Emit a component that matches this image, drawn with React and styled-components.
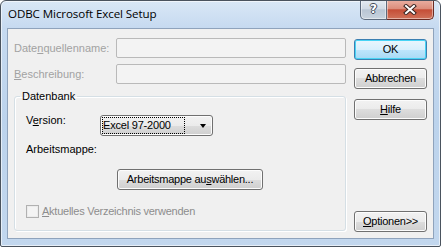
import React from 'react';
import styled, { createGlobalStyle } from 'styled-components';

const GlobalStyle = createGlobalStyle`
  html, body {
    margin: 0;
    padding: 0;
    background: #ffffff;
  }
  body {
    font-family: "Liberation Sans", Arial, sans-serif;
    font-size: 11px;
    color: #000;
  }
  * {
    box-sizing: border-box;
  }
`;

const Window = styled.div`
  width: 441px;
  height: 247px;
  display: flex;
  flex-direction: column;
  border: 1px solid #4a535e;
  border-radius: 6px 6px 2px 2px;
  background: linear-gradient(to bottom, #d9e7f6 0px, #c6daf0 27px, #bcd3ec 120px, #c2d7ee 100%);
  box-shadow: inset 0 0 0 1px rgba(255, 255, 255, 0.6);
  overflow: hidden;
`;

const TitleBar = styled.div`
  height: 27px;
  display: flex;
  align-items: flex-start;
  padding: 0 6px 0 7px;
`;

const Title = styled.div`
  flex: 1;
  margin-top: 5px;
  font-family: "Open Sans", "Noto Sans", sans-serif;
  font-size: 11.6px;
  line-height: 16px;
  color: #000;
  letter-spacing: -0.1px;
`;

const CaptionGroup = styled.div`
  display: flex;
  height: 20px;
  margin-top: -1px;
`;

const CaptionButton = styled.div`
  height: 20px;
  width: ${(p) => (p.$close ? 47 : 27)}px;
  display: flex;
  align-items: center;
  justify-content: center;
  border: 1px solid ${(p) => (p.$close ? '#6b2b22' : '#5d6b7d')};
  border-top: none;
  border-left: ${(p) => (p.$close ? 'none' : '1px solid #5d6b7d')};
  border-radius: ${(p) => (p.$close ? '0 0 5px 0' : '0 0 0 5px')};
  background: ${(p) =>
    p.$close
      ? 'linear-gradient(to bottom, #eab0a3 0%, #dc8e7c 45%, #c54e37 52%, #d0725a 100%)'
      : 'linear-gradient(to bottom, #e6ecf2 0%, #d2dbe5 45%, #b9c6d4 52%, #c8d3de 100%)'};
  box-shadow: inset 0 0 0 1px rgba(255, 255, 255, 0.45);
`;

const HelpGlyph = styled.span`
  font-family: "DejaVu Sans", sans-serif;
  font-weight: bold;
  font-size: 12px;
  line-height: 12px;
  color: #ffffff;
  text-shadow: -1px 0 #3e4856, 1px 0 #3e4856, 0 -1px #3e4856, 0 1px #3e4856;
  margin-top: -1px;
`;

const Client = styled.div`
  flex: 1;
  margin: 0 6px 7px 6px;
  border: 1px solid #8fa3bc;
  background: #f0f0f0;
  display: flex;
  gap: 8px;
  padding: 9px 6px 6px 6px;
`;

const LeftColumn = styled.div`
  width: 332px;
  display: flex;
  flex-direction: column;
`;

const RightColumn = styled.div`
  width: 73px;
  display: flex;
  flex-direction: column;
`;

const FieldRow = styled.div`
  display: flex;
  align-items: center;
  height: 20px;
  margin-top: ${(p) => p.$gap || 0}px;
`;

const Label = styled.span`
  width: ${(p) => p.$width || 102}px;
  line-height: 13px;
  color: ${(p) => (p.$disabled ? '#a2a2a2' : '#000')};
  white-space: nowrap;
`;

const TextInput = styled.div`
  width: 230px;
  height: 20px;
  border: 1px solid #b9b9b9;
  border-radius: 2px;
  background: #f3f3f3;
`;

const GroupBox = styled.fieldset`
  margin: 6px 0 0 0;
  padding: 11px 0 12px 0;
  border: 1px solid #d5dfe5;
  border-radius: 3px;
  min-inline-size: 0;
  box-shadow: inset 1px 1px 0 #ffffff, 1px 1px 0 #ffffff;
`;

const Legend = styled.legend`
  margin-left: 5px;
  padding: 0 2px;
  line-height: 13px;
  color: #000;
`;

const GroupBody = styled.div`
  display: flex;
  flex-direction: column;
  padding-left: 11px;
`;

const VersionRow = styled.div`
  display: flex;
  align-items: flex-start;
`;

const ComboBox = styled.div`
  width: 113px;
  height: 21px;
  margin-top: 1px;
  display: flex;
  align-items: center;
  padding: 0 4px 0 1px;
  border: 1px solid #707070;
  border-radius: 3px;
  background: linear-gradient(to bottom, #f2f2f2 0%, #ebebeb 50%, #dddddd 50%, #cfcfcf 100%);
  box-shadow: inset 0 0 0 1px #fcfcfc;
`;

const FocusText = styled.span`
  width: 83px;
  height: 17px;
  border: 1px dotted #000;
  line-height: 15px;
  letter-spacing: -0.2px;
`;

const Arrow = styled.span`
  margin-left: auto;
  margin-right: 2px;
  width: 0;
  height: 0;
  border-left: 3.5px solid transparent;
  border-right: 3.5px solid transparent;
  border-top: 4px solid #000;
`;

const PlainLabel = styled.div`
  margin-top: ${(p) => p.$gap || 0}px;
  line-height: 13px;
`;

const PushButton = styled.div`
  width: ${(p) => p.$width || 73}px;
  height: 21px;
  margin-top: ${(p) => (p.$gap === 'auto' ? 'auto' : `${p.$gap || 0}px`)};
  margin-left: ${(p) => p.$indent || 0}px;
  display: flex;
  align-items: center;
  justify-content: center;
  border: 1px solid ${(p) => (p.$default ? '#3c7fb1' : '#707070')};
  border-radius: 3px;
  background: ${(p) =>
    p.$default
      ? 'linear-gradient(to bottom, #eaf6fd 0%, #d9f0fc 50%, #bee6fd 50%, #a7d9f5 100%)'
      : 'linear-gradient(to bottom, #f2f2f2 0%, #ebebeb 50%, #dddddd 50%, #cfcfcf 100%)'};
  box-shadow: inset 0 0 0 1px ${(p) => (p.$default ? '#48d4f5' : '#fcfcfc')};
  line-height: 13px;
  letter-spacing: -0.25px;
  color: #000;
  white-space: nowrap;
`;

const CheckRow = styled.div`
  display: flex;
  align-items: center;
  gap: 3px;
  margin-top: 15px;
  height: 13px;
`;

const CheckBox = styled.span`
  width: 13px;
  height: 13px;
  border: 1px solid #b1b1b1;
  background: #f4f4f4;
  box-shadow: inset 0 0 0 1px #ececec;
`;

const CheckLabel = styled.span`
  color: #8d8d8d;
  line-height: 13px;
  letter-spacing: -0.25px;
`;

const CloseIcon = () => (
  <svg width="14" height="11" viewBox="0 0 14 11">
    <path d="M3 2 L11 9 M11 2 L3 9" stroke="#3a2420" strokeWidth="4" strokeLinecap="square" fill="none" />
    <path d="M3 2 L11 9 M11 2 L3 9" stroke="#ffffff" strokeWidth="2" strokeLinecap="square" fill="none" />
  </svg>
);

export default function App() {
  return (
    <>
      <GlobalStyle />
      <Window>
        <TitleBar>
          <Title>ODBC Microsoft Excel Setup</Title>
          <CaptionGroup>
            <CaptionButton>
              <HelpGlyph>?</HelpGlyph>
            </CaptionButton>
            <CaptionButton $close>
              <CloseIcon />
            </CaptionButton>
          </CaptionGroup>
        </TitleBar>
        <Client>
          <LeftColumn>
            <FieldRow>
              <Label $disabled>
                Date<u>n</u>quellenname:
              </Label>
              <TextInput />
            </FieldRow>
            <FieldRow $gap={6}>
              <Label $disabled>
                <u>B</u>eschreibung:
              </Label>
              <TextInput />
            </FieldRow>
            <GroupBox>
              <Legend>Datenbank</Legend>
              <GroupBody>
                <VersionRow>
                  <Label $width={74}>
                    V<u>e</u>rsion:
                  </Label>
                  <ComboBox>
                    <FocusText>Excel 97-2000</FocusText>
                    <Arrow />
                  </ComboBox>
                </VersionRow>
                <PlainLabel $gap={7}>Arbeitsmappe:</PlainLabel>
                <PushButton $width={146} $gap={13} $indent={91}>
                  Arbeitsmappe au<u>s</u>wählen...
                </PushButton>
                <CheckRow>
                  <CheckBox />
                  <CheckLabel>
                    <u>A</u>ktuelles Verzeichnis verwenden
                  </CheckLabel>
                </CheckRow>
              </GroupBody>
            </GroupBox>
          </LeftColumn>
          <RightColumn>
            <PushButton $default $gap={1}>OK</PushButton>
            <PushButton $gap={8}>Abbrechen</PushButton>
            <PushButton $gap={10}>
              <u>H</u>ilfe
            </PushButton>
            <PushButton $gap="auto">
              <u>O</u>ptionen&gt;&gt;
            </PushButton>
          </RightColumn>
        </Client>
      </Window>
    </>
  );
}
